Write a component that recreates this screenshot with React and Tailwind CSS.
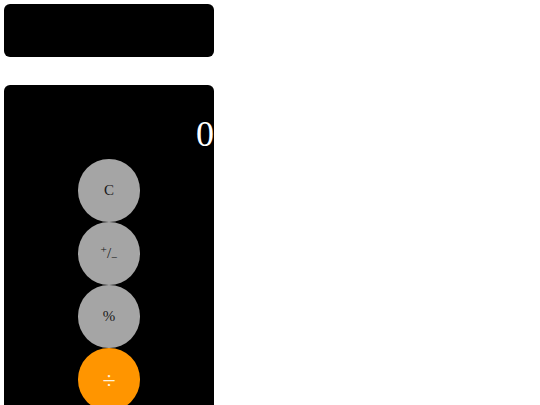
export default function App() {
  const btn = "w-[62px] h-[63px] rounded-full flex items-center justify-center text-[15px] font-['Liberation_Serif','Times_New_Roman',serif]";
  return (
    <div className="w-[540px] h-[405px] overflow-hidden bg-white p-[4px] font-['Liberation_Serif','Times_New_Roman',serif]">
      <div className="w-[210px] h-[53px] bg-black rounded-[6px]" />
      <div className="mt-[28px] w-[210px] h-[400px] bg-black rounded-t-[6px] pt-[29px] flex flex-col">
        <div className="text-right text-white text-[36px] leading-[40px] font-['Liberation_Serif','Times_New_Roman',serif]">0</div>
        <div className="mt-[5px] flex flex-col items-center">
          <div className={btn + " bg-[#a5a5a5] text-[#1a1a1a]"}>C</div>
          <div className={btn + " bg-[#a5a5a5] text-[#1a1a1a]"}>
            <span><sup>+</sup>/<sub>−</sub></span>
          </div>
          <div className={btn + " bg-[#a5a5a5] text-[#1a1a1a]"}>%</div>
          <div className={btn + " bg-[#ff9500] text-[#fff3dc] !text-[24px]"}>÷</div>
        </div>
      </div>
    </div>
  );
}
